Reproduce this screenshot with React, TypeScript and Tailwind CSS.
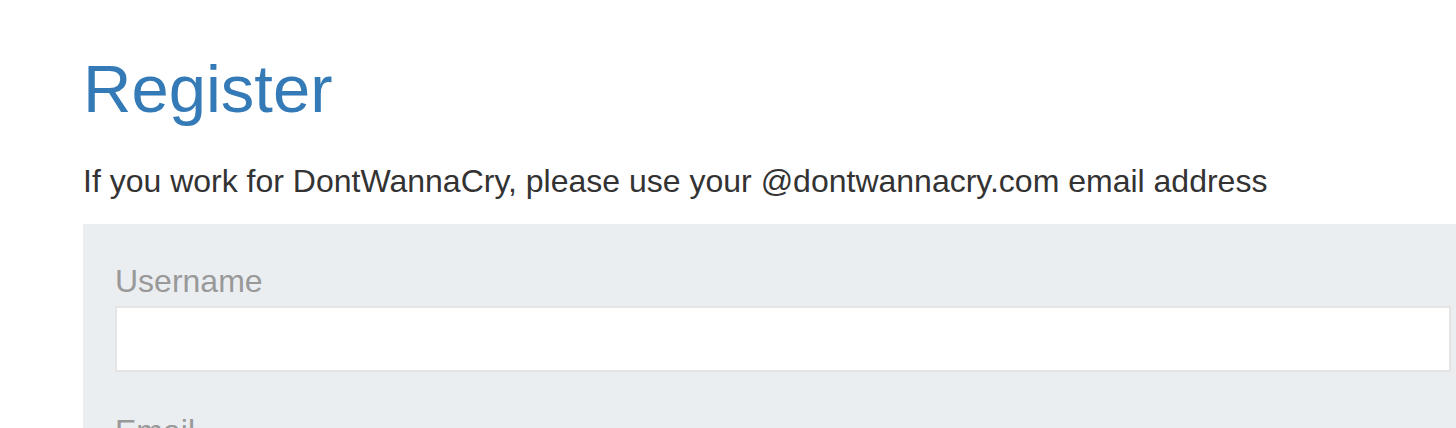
import React from "react";

function Field({ label, type = "text" }: { label: string; type?: string }) {
  return (
    <div className="mb-[37px]">
      <label className="block text-[32px] leading-[45.7px] text-[#999999] mb-[2px]">{label}</label>
      <input
        type={type}
        className="block w-full h-[66px] bg-white border-2 border-[#e4e4e4] outline-none px-4 text-[32px]"
      />
    </div>
  );
}

export default function App() {
  return (
    <div
      className="min-h-screen bg-white overflow-hidden"
      style={{ fontFamily: '"Liberation Sans", Arial, sans-serif' }}
    >
      <div className="pl-[83px] -mr-[20px]">
        <h1 className="pt-[52px] text-[67px] leading-[74px] text-[#337ab7] font-normal">Register</h1>
        <p className="mt-[33px] text-[32px] leading-[45.7px] text-[#333333]">
          If you work for DontWannaCry, please use your @dontwannacry.com email address
        </p>
        <form className="mt-[19px] bg-[#ebeef1] pt-[35px] pl-[32px] pr-[25px] pb-8">
          <Field label="Username" />
          <Field label="Email" type="email" />
          <Field label="Password" type="password" />
        </form>
      </div>
    </div>
  );
}
